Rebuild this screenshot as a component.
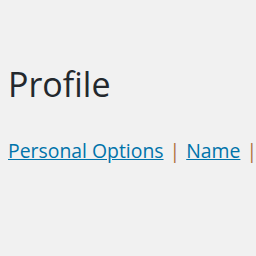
export default function App() {
  return (
    <div className="w-[256px] h-[256px] bg-[#f1f1f1] overflow-hidden" style={{ fontFamily: '"Open Sans", sans-serif' }}>
      <h1 className="pl-[8px] pt-[64px] text-[34px] leading-[40px] text-[#23282d] font-normal">Profile</h1>
      <div className="pl-[8px] mt-[35px] text-[19.4px] leading-[24px] whitespace-nowrap text-[#b0703a]">
        <a href="#" className="text-[#0073aa] underline">Personal Options</a>
        <span className="mx-[6px]">|</span>
        <a href="#" className="text-[#0073aa] underline">Name</a>
        <span className="mx-[6px]">|</span>
      </div>
    </div>
  );
}
